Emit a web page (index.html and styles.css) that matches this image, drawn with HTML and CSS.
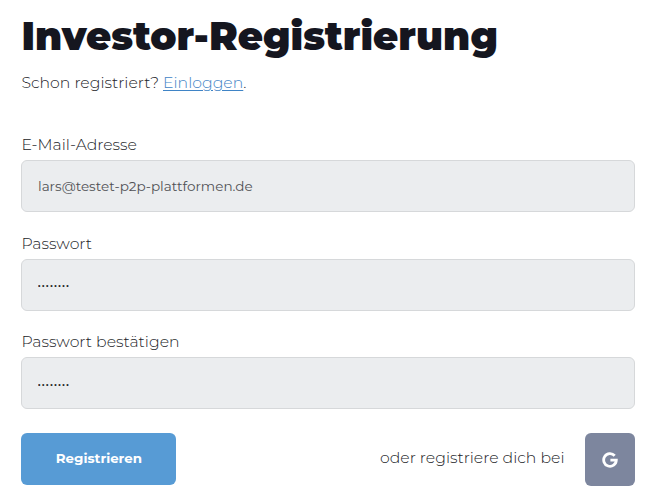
FILE: index.html
```html
<!DOCTYPE html>
<html lang="de">
<head>
  <meta charset="UTF-8">
  <meta name="viewport" content="width=device-width, initial-scale=1.0">
  <title>Investor-Registrierung</title>
  <link rel="stylesheet" href="styles.css">
</head>
<body>

<main class="container">
  <h1>Investor-Registrierung</h1>
  <p class="login-hinweis">Schon registriert? <a href="#">Einloggen</a>.</p>

  <form class="formular">
    <div class="feld">
      <label for="email">E-Mail-Adresse</label>
      <input type="email" id="email" value="lars@testet-p2p-plattformen.de">
    </div>
    <div class="feld">
      <label for="passwort">Passwort</label>
      <input type="password" id="passwort" value="passwort">
    </div>
    <div class="feld">
      <label for="passwort2">Passwort bestätigen</label>
      <input type="password" id="passwort2" value="passwort">
    </div>

    <div class="aktionen">
      <button type="button" class="btn-registrieren">Registrieren</button>
      <span class="oder">oder registriere dich bei</span>
      <button type="button" class="btn-google" aria-label="Google">
        <svg viewBox="0 0 16 16" width="16" height="16">
          <path d="M12.7 3.8A6.3 6.3 0 1 0 14.3 8.2H8.4" fill="none" stroke="#fff" stroke-width="2.8"/>
        </svg>
      </button>
    </div>
  </form>
</main>

</body>
</html>
```

FILE: styles.css
```css
* {
  box-sizing: border-box;
  margin: 0;
  padding: 0;
  font-family: Montserrat, Inter, sans-serif;
}

body {
  background-color: #fff;
  color: #222327;
  font-size: 15.7px;
  font-weight: 300;
  line-height: 20px;
}

.container {
  padding: 15px 20px 0 21.4px;
}

h1 {
  color: #15161f;
  font-size: 38.7px;
  font-weight: 900;
  line-height: 44px;
  white-space: nowrap;
}

.login-hinweis {
  margin-top: 14px;
}

.login-hinweis a {
  color: #3f84c6;
  text-decoration: underline;
  text-underline-offset: 2px;
}

.formular {
  margin-top: 42px;
}

.feld {
  margin-bottom: 21.5px;
}

.feld label {
  display: block;
  margin-bottom: 5px;
}

.feld input {
  display: block;
  width: 100%;
  height: 52px;
  padding: 0 15.6px;
  background-color: #ebedef;
  border: 1px solid #d6d8da;
  border-radius: 6px;
  color: #505155;
  font-size: 13.55px;
  font-weight: 400;
  outline: none;
}

.feld input[type="password"] {
  padding-top: 2px;
  color: #222;
  font-family: "Liberation Sans", sans-serif;
  font-size: 7px;
  letter-spacing: 1.6px;
}

.aktionen {
  display: flex;
  align-items: flex-start;
  margin-top: 24px;
}

.aktionen button {
  border: none;
  border-radius: 6px;
  color: #fff;
  cursor: pointer;
}

.aktionen .btn-registrieren {
  width: 155px;
  height: 52px;
  padding-bottom: 2px;
  background-color: #579bd5;
  font-size: 13.4px;
  font-weight: 700;
}

.oder {
  margin-left: auto;
  margin-top: 15px;
}

.btn-google {
  display: flex;
  align-items: center;
  justify-content: center;
  width: 50.5px;
  height: 53px;
  margin-left: 20px;
  background-color: #7d869e;
}
```
